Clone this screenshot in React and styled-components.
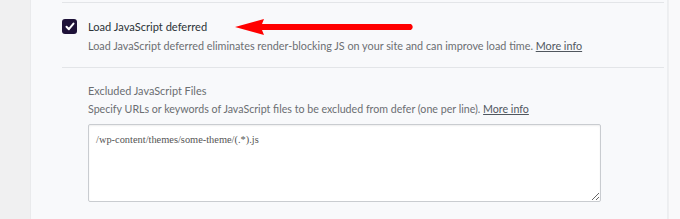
import React from "react";
import styled, { createGlobalStyle } from "styled-components";

const Global = createGlobalStyle`
  html, body { margin: 0; padding: 0; }
  body {
    background: #f1f1f1;
    font-family: Lato, "Noto Sans", sans-serif;
    width: 680px;
    height: 219px;
    overflow: hidden;
  }
`;

const Page = styled.div`
  display: flex;
  height: 219px;
`;

const Gutter = styled.div`
  width: 30px;
  background: #f0f0f1;
  flex: none;
`;

const Panel = styled.div`
  width: 638px;
  flex: none;
  background: #f8f9fb;
  border-left: 1px solid #e9eaec;
  border-right: 1px solid #eceef0;
  padding: 2px 3px 0 31px;
  box-sizing: border-box;
`;

const RightStrip = styled.div`
  flex: 1;
  background: #f9f9fa;
  border-left: 1px solid #eeeff1;
`;

const Section = styled.div`
  border-top: 1px solid #e3e5e8;
  padding: ${(p) => p.$pad};
`;

const OptionRow = styled.div`
  display: flex;
  align-items: flex-start;
  gap: 11px;
`;

const Check = styled.span`
  width: 15px;
  height: 15px;
  border-radius: 3px;
  background: #1e1238;
  display: flex;
  align-items: center;
  justify-content: center;
  flex: none;
  margin-top: 1px;
`;

const Texts = styled.div`
  display: flex;
  flex-direction: column;
`;

const LabelLine = styled.div`
  position: relative;
  display: flex;
  align-items: center;
`;

const Label = styled.span`
  font-size: 11.1px;
  line-height: 17px;
  color: #2c3338;
`;

const Arrow = styled.svg`
  position: absolute;
  left: 147px;
  top: -1px;
`;

const Desc = styled.p`
  margin: ${(p) => p.$m || "3px 0 0"};
  font-size: ${(p) => p.$size || "10.8px"};
  line-height: 16px;
  color: #6b6e72;
  a {
    color: #50575e;
    text-decoration: underline;
  }
`;

const Sub = styled.div`
  padding-left: 26px;
  display: flex;
  flex-direction: column;
`;

const Title = styled.div`
  font-size: 10.9px;
  line-height: 16px;
  color: #6b6e72;
`;

const Area = styled.textarea`
  margin-top: 7px;
  width: 513px;
  height: 78px;
  box-sizing: border-box;
  border: 1px solid #c9ccd0;
  border-radius: 2px;
  box-shadow: inset 0 1px 2px rgba(0, 0, 0, 0.07);
  background: #fff;
  padding: 7px 7px;
  font-family: "Liberation Serif", serif;
  font-size: 10.4px;
  line-height: 16px;
  color: #555;
  resize: both;
  outline: none;
`;

export default function App() {
  return (
    <>
      <Global />
      <Page>
        <Gutter />
        <Panel>
          <Section $pad="15px 0 13px 0">
            <OptionRow>
              <Check>
                <svg width="10" height="9" viewBox="0 0 10 9">
                  <path d="M1.5 4.8 L3.9 7.2 L8.5 1.6" fill="none" stroke="#fff" strokeWidth="2" strokeLinecap="round" strokeLinejoin="round" />
                </svg>
              </Check>
              <Texts>
                <LabelLine>
                  <Label>Load JavaScript deferred</Label>
                  <Arrow width="182" height="20" viewBox="0 0 182 20">
                    <path d="M0 10 L29 2 L27 7 L176 7 Q179.5 10 176 13 L27 13 L29 18 Z" fill="#f00" />
                  </Arrow>
                </LabelLine>
                <Desc>
                  Load JavaScript deferred eliminates render-blocking JS on your site and can improve load time. <a>More info</a>
                </Desc>
              </Texts>
            </OptionRow>
          </Section>
          <Section $pad="15px 0 0 0">
            <Sub>
              <Title>Excluded JavaScript Files</Title>
              <Desc $m="2px 0 0" $size="10.65px">
                Specify URLs or keywords of JavaScript files to be excluded from defer (one per line). <a>More info</a>
              </Desc>
              <Area readOnly defaultValue="/wp-content/themes/some-theme/(.*).js" />
            </Sub>
          </Section>
        </Panel>
        <RightStrip />
      </Page>
    </>
  );
}
